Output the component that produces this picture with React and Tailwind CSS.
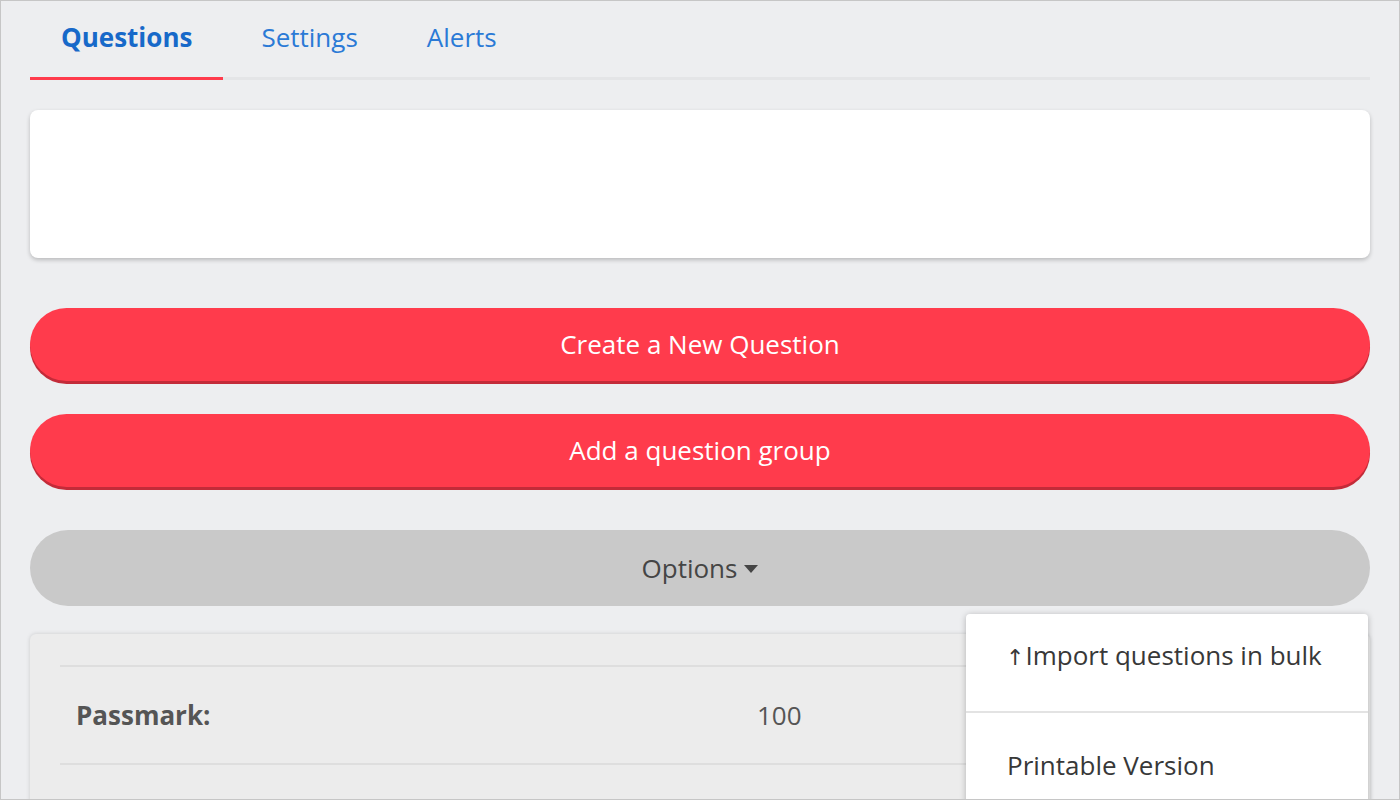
import React from "react";

const tabs = [
  { label: "Questions", active: true },
  { label: "Settings" },
  { label: "Alerts" },
];

function Tabs() {
  return (
    <div className="flex gap-[7px] border-b-[3px] border-[#e4e5e7]">
      {tabs.map((t) => (
        <div
          key={t.label}
          className={
            "h-[76px] -mb-[3px] px-[31px] pt-[18px] text-[26px] leading-[36px] " +
            (t.active
              ? "border-b-[3px] border-[#ff3b4c] font-bold text-[#1769c9] h-[79px]"
              : "text-[#2b7ad6]")
          }
        >
          {t.label}
        </div>
      ))}
    </div>
  );
}

function RedButton({ children, className = "" }) {
  return (
    <button
      className={
        "w-full h-[73px] rounded-full bg-[#ff3b4c] text-white text-[26px] shadow-[0_3px_0_#c32b39] " +
        className
      }
    >
      {children}
    </button>
  );
}

function OptionsMenu() {
  return (
    <div className="absolute left-[965px] top-[613px] w-[402px] h-[200px] bg-white rounded-[4px] shadow-[0_1px_6px_rgba(0,0,0,0.25)] text-[26px] text-[#383838]">
      <div className="h-[97px] pl-[40px] pt-[23px] leading-[36px]">
        <span style={{ fontFamily: '"DejaVu Sans", sans-serif' }} className="text-[22px] mr-[1px]">
          ↑
        </span>
        Import questions in bulk
      </div>
      <div className="border-t-2 border-[#e3e3e3] pl-[41px] pt-[34px] leading-[36px]">
        Printable Version
      </div>
    </div>
  );
}

export default function App() {
  return (
    <div
      className="relative w-[1400px] h-[800px] overflow-hidden border border-[#c6c6c6] bg-[#edeef0]"
      style={{ fontFamily: '"Open Sans", "Noto Sans", sans-serif' }}
    >
      <div className="px-[29px]">
        <Tabs />

        <div className="mt-[30px] h-[148px] rounded-lg bg-white shadow-[0_2px_4px_rgba(0,0,0,0.22)]" />

        <RedButton className="mt-[50px]">Create a New Question</RedButton>
        <RedButton className="mt-[33px]">Add a question group</RedButton>

        <button className="mt-[43px] w-full h-[76px] rounded-full bg-[#c9c9c9] text-[26px] text-[#454545] flex items-center justify-center gap-[7px]">
          Options
          <svg width="14" height="8" viewBox="0 0 14 8" className="mt-[2px]">
            <path d="M0 0h14L7 8z" fill="#454545" />
          </svg>
        </button>

        <div className="mt-[28px] h-[200px] rounded-t-md bg-[#ececec] shadow-[0_0_4px_rgba(0,0,0,0.15)] px-[30px] pt-[31px]">
          <div className="border-t-2 border-[#dedede] flex items-center h-[100px] border-b-2">
            <div className="w-[697px] pl-[16px] text-[26px] font-bold text-[#555]">
              Passmark:
            </div>
            <div className="text-[26px] text-[#555]">100</div>
          </div>
        </div>
      </div>

      <OptionsMenu />
    </div>
  );
}
